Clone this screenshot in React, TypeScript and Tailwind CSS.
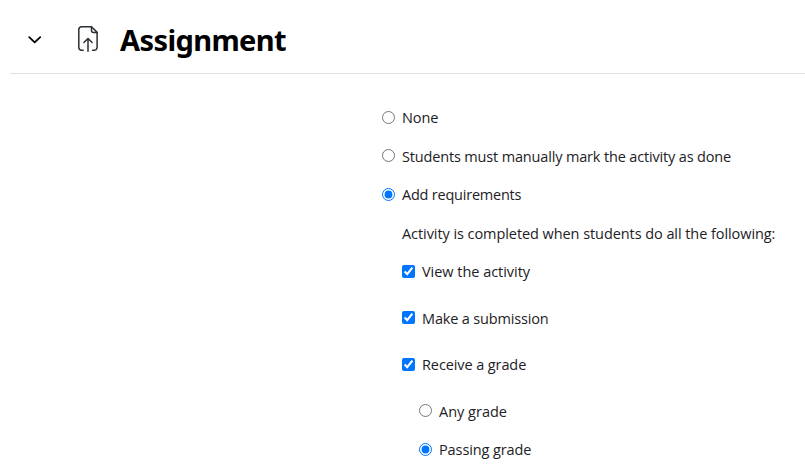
import { useState } from "react";

type OptionProps = {
  type: "radio" | "checkbox";
  name: string;
  label: string;
  checked: boolean;
  onChange: () => void;
  className?: string;
  labelClassName?: string;
};

function Option({ type, name, label, checked, onChange, className = "", labelClassName = "" }: OptionProps) {
  return (
    <label className={`flex h-[25px] items-center ${className}`}>
      <input
        type={type}
        name={name}
        checked={checked}
        onChange={onChange}
        className="m-0 mr-[7px] h-[13px] w-[13px] shrink-0 accent-[#0075ff]"
      />
      <span className={`whitespace-nowrap ${labelClassName}`}>{label}</span>
    </label>
  );
}

function AssignmentIcon() {
  return (
    <svg width="20" height="26" viewBox="0 0 20 26" fill="none" stroke="#2b3036" strokeWidth="1.5" strokeLinecap="round" strokeLinejoin="round">
      <path d="M5.2 24.3H3.7A3 3 0 0 1 .8 21.3V3.7A3 3 0 0 1 3.7.8h9.8l5.6 5.6v14.9a3 3 0 0 1-3 3h-1.5" />
      <path d="M13.5.9v3.8a1.7 1.7 0 0 0 1.7 1.7H19" />
      <path d="M10 25.2V12.5M5.9 16.5l4.1-4 4.1 4" />
    </svg>
  );
}

export default function App() {
  const [completion, setCompletion] = useState("requirements");
  const [view, setView] = useState(true);
  const [submit, setSubmit] = useState(true);
  const [grade, setGrade] = useState(true);
  const [gradeType, setGradeType] = useState("passing");

  return (
    <div className="h-[475px] overflow-hidden bg-white font-['Open_Sans','Noto_Sans',sans-serif] text-[#1d2125]">
      {/* Section header */}
      <header className="ml-[10px] flex h-[74px] items-center border-b border-[#dee2e6] pl-[17px] pt-1">
        <button type="button" aria-label="Collapse section" className="flex h-4 w-4 items-center justify-center pt-0.5">
          <svg width="16" height="16" viewBox="0 0 16 16" fill="none" stroke="#000" strokeWidth="1.8" strokeLinecap="round" strokeLinejoin="round">
            <path d="m2.2 5.2 5.5 5.2 5.5-5.2" />
          </svg>
        </button>
        <span className="ml-[35px]">
          <AssignmentIcon />
        </span>
        <h2 className="ml-[22px] pt-[3px] font-['Noto_Sans','Open_Sans',sans-serif] text-[29px] font-bold leading-9 tracking-[-0.6px] text-black">
          Assignment
        </h2>
      </header>

      {/* Completion conditions */}
      <div className="pl-[382px] pt-[31px] text-[14.5px] leading-[25px] tracking-[-0.1px]">
        <Option
          type="radio"
          name="completion"
          label="None"
          checked={completion === "none"}
          onChange={() => setCompletion("none")}
        />
        <Option
          type="radio"
          name="completion"
          label="Students must manually mark the activity as done"
          checked={completion === "manual"}
          onChange={() => setCompletion("manual")}
          className="mt-[13px]"
          labelClassName="pt-0.5 tracking-[-0.16px]"
        />
        <Option
          type="radio"
          name="completion"
          label="Add requirements"
          checked={completion === "requirements"}
          onChange={() => setCompletion("requirements")}
          className="mt-[14px]"
          labelClassName="tracking-[-0.22px]"
        />
        <div className="pl-5">
          <p className="mt-[14px] whitespace-nowrap tracking-[-0.07px]">
            Activity is completed when students do all the following:
          </p>
          <Option
            type="checkbox"
            name="view"
            label="View the activity"
            checked={view}
            onChange={() => setView(!view)}
            className="mt-[13px]"
            labelClassName="tracking-[-0.03px]"
          />
          <Option
            type="checkbox"
            name="submit"
            label="Make a submission"
            checked={submit}
            onChange={() => setSubmit(!submit)}
            className="mt-[21px]"
            labelClassName="pt-0.5 tracking-[-0.16px]"
          />
          <Option
            type="checkbox"
            name="grade"
            label="Receive a grade"
            checked={grade}
            onChange={() => setGrade(!grade)}
            className="mt-[22px]"
          />
          <div className="pl-[17px]">
            <Option
              type="radio"
              name="gradeType"
              label="Any grade"
              checked={gradeType === "any"}
              onChange={() => setGradeType("any")}
              className="mt-[21px]"
              labelClassName="pt-0.5 tracking-normal"
            />
            <Option
              type="radio"
              name="gradeType"
              label="Passing grade"
              checked={gradeType === "passing"}
              onChange={() => setGradeType("passing")}
              className="mt-[14px]"
            />
          </div>
        </div>
      </div>
    </div>
  );
}
